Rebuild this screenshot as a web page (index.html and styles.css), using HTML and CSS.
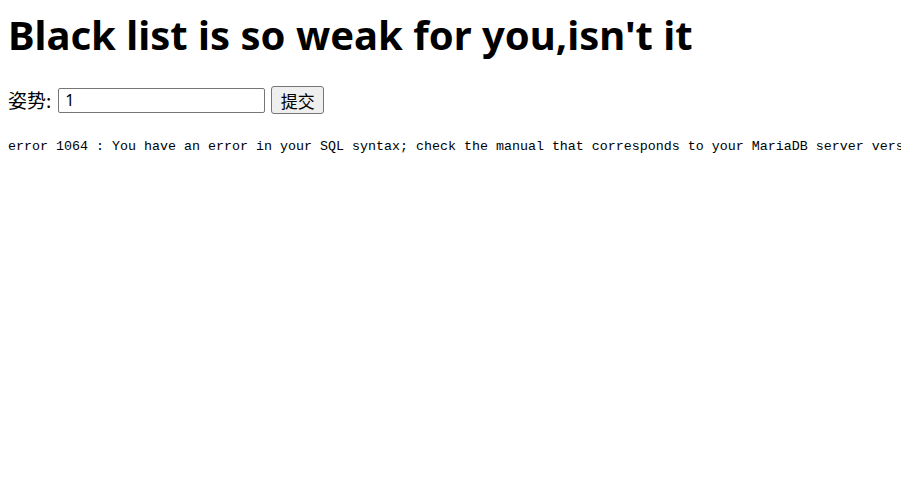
FILE: index.html
```html
<!DOCTYPE html>
<html>
<head>
<meta charset="utf-8">
<title>Black list</title>
<link rel="stylesheet" href="styles.css">
</head>
<body>
<h1 class="title">Black list is so weak for you,isn't it</h1>
<form class="inject-form">
  <span class="label">姿势:</span>
  <input class="field" type="text" name="inject" value="1">
  <input class="submit" type="submit" value="提交">
</form>
<pre class="error">error 1064 : You have an error in your SQL syntax; check the manual that corresponds to your MariaDB server version for the right syntax to use near '' at line 1</pre>
</body>
</html>
```
FILE: styles.css
```css
html, body {
  margin: 0;
  padding: 0;
  background: #fff;
  overflow: hidden;
}
body {
  padding: 8px;
  font-family: "Noto Sans CJK SC", "Noto Sans", sans-serif;
  font-size: 16px;
  color: #000;
}
.title {
  margin: 1px 0 0 0;
  font-family: "Noto Sans", "Noto Sans CJK SC", sans-serif;
  font-weight: bold;
  font-size: 40px;
  line-height: 52px;
  letter-spacing: 0;
}
.inject-form {
  display: flex;
  align-items: center;
  margin: 25px 0 0 0;
}
.label {
  font-size: 19px;
  line-height: 28px;
  margin-right: 7px;
}
.field {
  box-sizing: border-box;
  width: 207px;
  height: 25px;
  margin: 0 6px 0 0;
  border: 1px solid #767676;
  border-radius: 2px;
  padding: 1px 6px;
  font-family: "Noto Sans", sans-serif;
  font-size: 16px;
  color: #000;
}
.submit {
  box-sizing: border-box;
  width: 53px;
  height: 28px;
  margin: 0;
  border: 1px solid #767676;
  border-radius: 3px;
  background: #efefef;
  font-family: "Noto Sans CJK SC", sans-serif;
  font-size: 17px;
  padding: 0;
}
.error {
  margin: 26px 0 0 0;
  font-family: "Liberation Mono", monospace;
  font-size: 13.33px;
  line-height: 14px;
  white-space: pre;
}
```
